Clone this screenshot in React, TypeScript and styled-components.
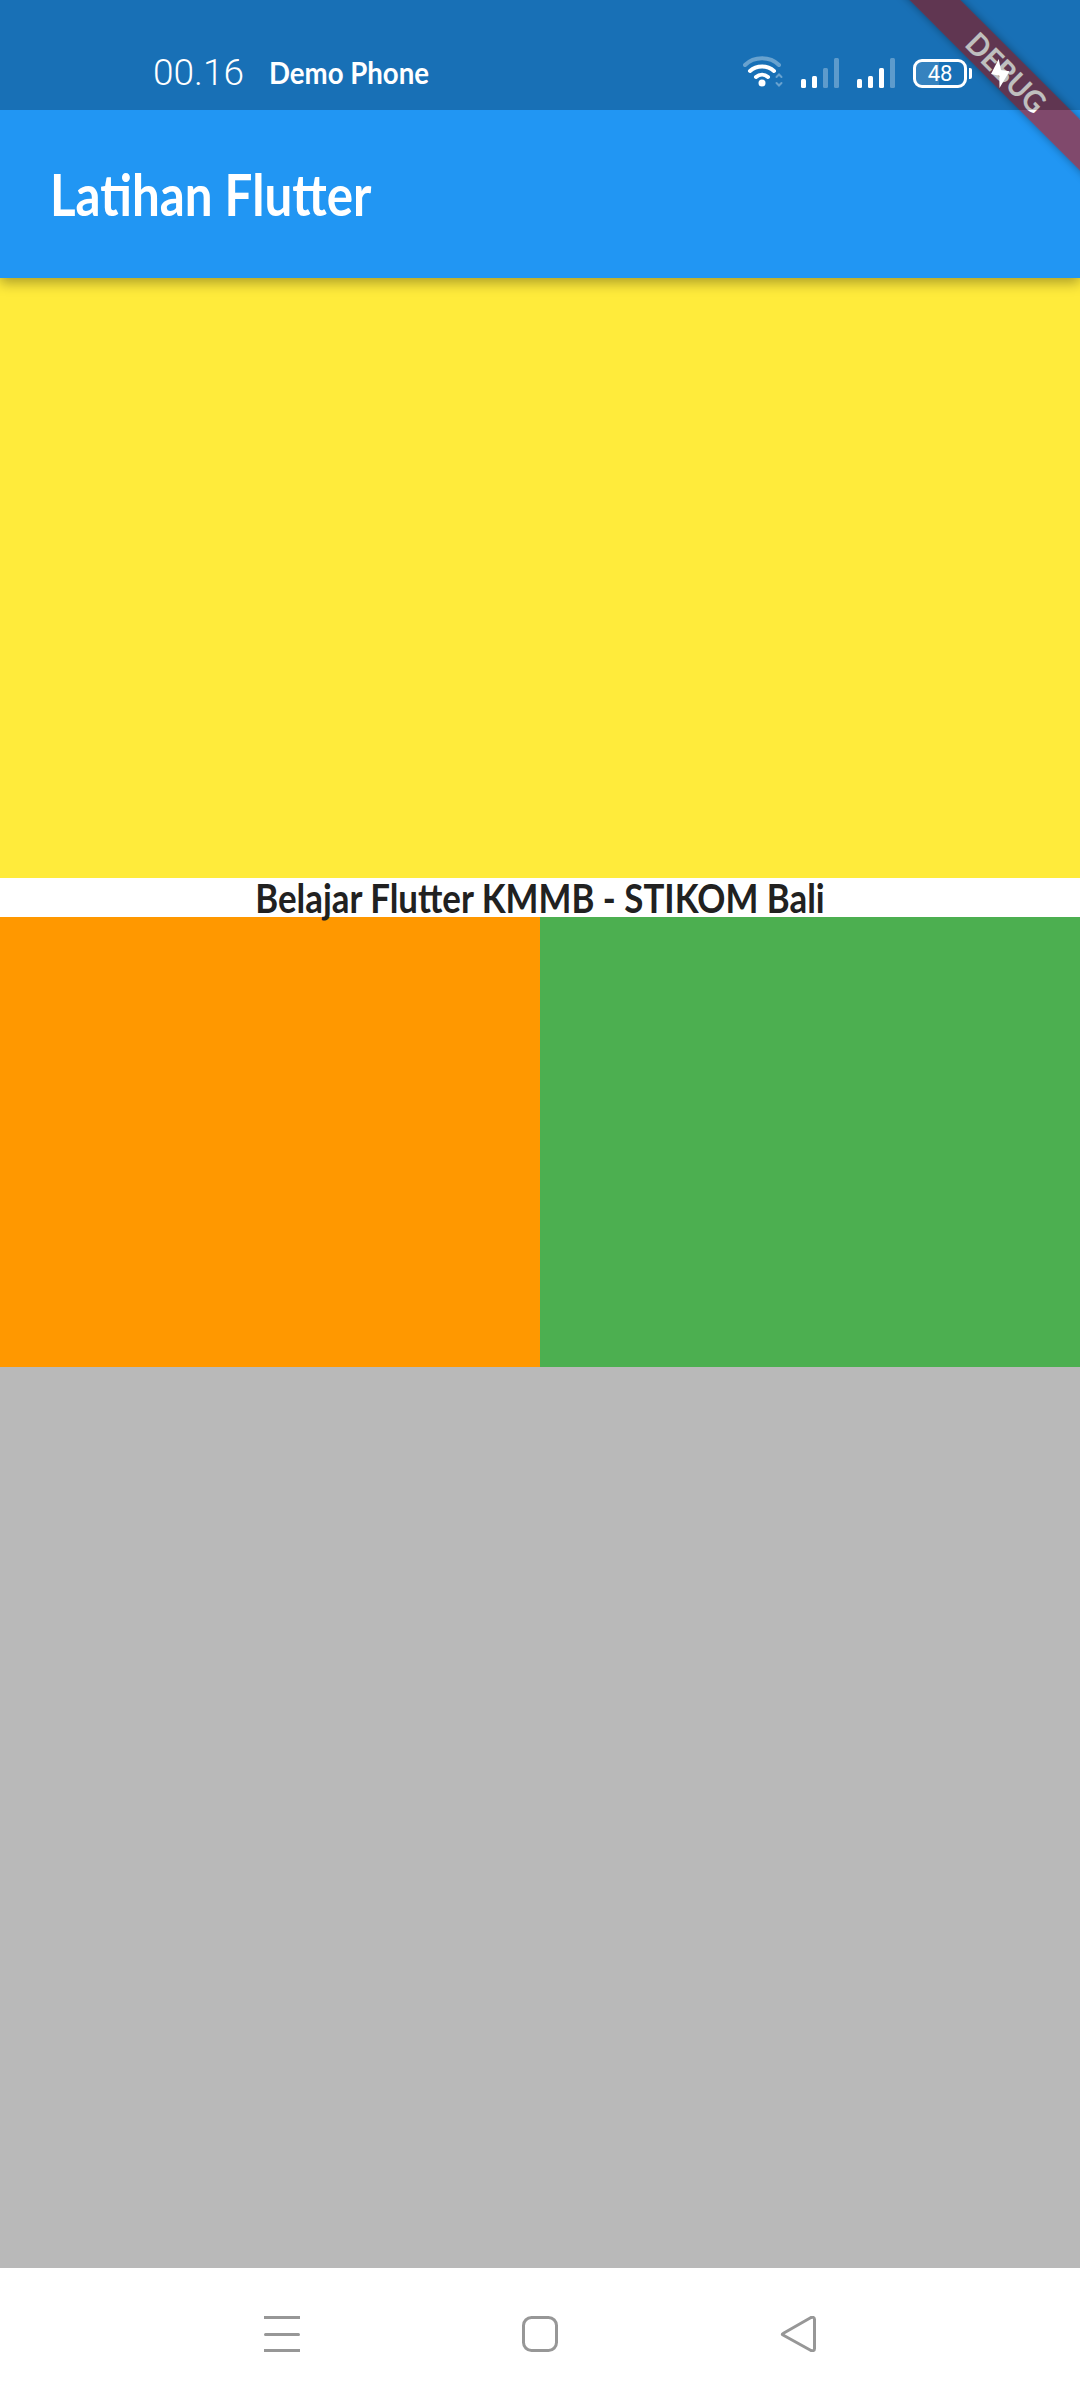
import styled, { createGlobalStyle } from 'styled-components';

const GlobalStyle = createGlobalStyle`
  html,
  body {
    margin: 0;
    padding: 0;
    background: #fff;
  }
`;

const DISPLAY_FONT = `Lato, 'Noto Sans', sans-serif`;

const WifiIcon = () => (
  <svg width="40" height="32" viewBox="0 0 40 32" fill="none" stroke="#fff" strokeLinecap="round">
    <path d="M2 9 C11 0 27 0 36 9" strokeWidth="4" opacity="0.35" />
    <path d="M7 15 C13.500 9 24.500 9 31 15" strokeWidth="4" />
    <path d="M13 21 C16.500 18 21.500 18 25 21" strokeWidth="4" />
    <circle cx="19" cy="27" r="3.500" fill="#fff" stroke="none" />
    <path d="M33.500 21 L36 18.500 L38.500 21 M33.500 27 L36 29.500 L38.500 27" strokeWidth="2" opacity="0.35" />
  </svg>
);

const BAR_HEIGHTS = [9, 12, 20, 30];

const SignalIcon = ({ active }: { active: number }) => (
  <svg width="38" height="30" viewBox="0 0 38 30" fill="#fff">
    {BAR_HEIGHTS.map((height, index) => (
      <rect
        key={height}
        x={index * 11}
        y={30 - height}
        width="5"
        height={height}
        rx="1.500"
        opacity={index < active ? 1 : 0.3}
      />
    ))}
  </svg>
);

const BoltIcon = () => (
  <svg width="19" height="29" viewBox="0 0 19 29" fill="#fff">
    <path d="M7.700 0 L0 15 L8.300 16.700 L8.500 29 L18.500 12.300 L10 11 Z" />
  </svg>
);

const MenuIcon = () => (
  <svg width="36" height="36" viewBox="0 0 36 36" fill="#979797">
    <rect y="0" width="36" height="3" />
    <rect y="17" width="36" height="3" rx="1.500" />
    <rect y="33" width="36" height="3" />
  </svg>
);

const HomeIcon = () => (
  <svg width="36" height="36" viewBox="0 0 36 36" fill="none" stroke="#979797" strokeWidth="3">
    <rect x="1.500" y="1.500" width="33" height="33" rx="8" />
  </svg>
);

const BackIcon = () => (
  <svg width="36" height="36" viewBox="0 0 36 36" fill="none" stroke="#979797" strokeWidth="3" strokeLinejoin="round">
    <path d="M3 17.500 C2 18 2 18.500 3 19 L31 34.500 C33 35.300 34.500 34.500 34.500 32.500 L34.500 3.500 C34.500 1.500 33 0.700 31 1.500 Z" />
  </svg>
);

export default function App() {
  return (
    <>
      <GlobalStyle />
      <Page>
        <Header>
          <DebugBanner>
            <DebugLabel>DEBUG</DebugLabel>
          </DebugBanner>
          <StatusBar>
            <Clock>00.16</Clock>
            <Carrier>Demo Phone</Carrier>
            <StatusIcons>
              <WifiIcon />
              <SignalIcon active={2} />
              <SignalIcon active={3} />
              <Battery>
                <BatteryLevel>48</BatteryLevel>
              </Battery>
              <BoltIcon />
            </StatusIcons>
          </StatusBar>
          <AppBar>
            <AppTitle>Latihan Flutter</AppTitle>
          </AppBar>
        </Header>
        <YellowBlock />
        <Caption>
          <CaptionText>Belajar Flutter KMMB - STIKOM Bali</CaptionText>
        </Caption>
        <ColorRow>
          <OrangeBlock />
          <GreenBlock />
        </ColorRow>
        <GreyBlock />
        <NavBar>
          <MenuIcon />
          <HomeIcon />
          <BackIcon />
        </NavBar>
      </Page>
    </>
  );
}

const Page = styled.div`
  display: flex;
  flex-direction: column;
  width: 1080px;
  height: 2400px;
  overflow: hidden;
`;

const Header = styled.header`
  position: relative;
  z-index: 1;
  flex: none;
  background: #2196f3;
  box-shadow: 0 5px 12px rgb(0 0 0 / 32%);
`;

const DebugBanner = styled.div`
  position: absolute;
  top: 54px;
  right: -77px;
  z-index: 1;
  display: flex;
  align-items: center;
  justify-content: center;
  width: 300px;
  height: 36px;
  background: rgb(183 28 28 / 63%);
  box-shadow: 0 0 9px rgb(0 0 0 / 35%);
  transform: rotate(45deg);
`;

const DebugLabel = styled.span`
  font-family: ${DISPLAY_FONT};
  font-size: 30px;
  font-weight: 700;
  line-height: 36px;
  color: #fff;
  transform: scaleX(0.95);
`;

const StatusBar = styled.div`
  position: relative;
  z-index: 2;
  box-sizing: border-box;
  display: flex;
  align-items: center;
  height: 110px;
  padding: 34px 70px 0 153px;
  color: #fff;
  background: rgb(0 0 0 / 25%);
`;

const Clock = styled.span`
  font-family: Roboto, sans-serif;
  font-size: 37px;
  font-weight: 300;
  line-height: 1;
`;

const Carrier = styled.span`
  margin-left: 25px;
  font-family: ${DISPLAY_FONT};
  font-size: 30px;
  font-weight: 700;
  line-height: 1;
  white-space: nowrap;
  transform: scaleX(0.92);
  transform-origin: left center;
`;

const StatusIcons = styled.div`
  display: flex;
  gap: 18px;
  align-items: flex-end;
  margin-left: auto;
`;

const Battery = styled.div`
  position: relative;
  box-sizing: border-box;
  display: flex;
  align-items: center;
  justify-content: center;
  width: 54px;
  height: 29px;
  margin-right: 6px;
  background: linear-gradient(90deg, rgb(255 255 255 / 13%) 48%, transparent 48%);
  border: 3px solid #fff;
  border-radius: 9px;

  &::after {
    position: absolute;
    top: 6px;
    right: -8px;
    width: 3px;
    height: 11px;
    content: '';
    background: #fff;
    border-radius: 0 2px 2px 0;
  }
`;

const BatteryLevel = styled.span`
  font-family: Roboto, sans-serif;
  font-size: 22px;
  font-weight: 400;
  line-height: 1;
`;

const AppBar = styled.div`
  display: flex;
  align-items: center;
  height: 168px;
  padding-left: 50px;
`;

const AppTitle = styled.h1`
  margin: 0;
  font-family: ${DISPLAY_FONT};
  font-size: 58px;
  font-weight: 700;
  line-height: 1;
  color: #fff;
  white-space: nowrap;
  transform: scaleX(0.85);
  transform-origin: left center;
`;

const YellowBlock = styled.div`
  flex: none;
  height: 600px;
  background: #ffeb3b;
`;

const Caption = styled.div`
  display: flex;
  flex: none;
  align-items: center;
  justify-content: center;
  height: 39px;
  background: #fff;
`;

const CaptionText = styled.span`
  font-family: ${DISPLAY_FONT};
  font-size: 41px;
  font-weight: 700;
  line-height: 39px;
  color: #212121;
  white-space: nowrap;
  transform: scaleX(0.85);
`;

const ColorRow = styled.div`
  display: grid;
  flex: none;
  grid-template-columns: 1fr 1fr;
  height: 450px;
`;

const OrangeBlock = styled.div`
  background: #ff9800;
`;

const GreenBlock = styled.div`
  background: #4caf50;
`;

const GreyBlock = styled.div`
  flex: 1;
  background: #b9b9b9;
`;

const NavBar = styled.nav`
  box-sizing: border-box;
  display: flex;
  flex: none;
  align-items: center;
  justify-content: space-between;
  height: 132px;
  padding: 0 264px;
  background: #fff;
`;
